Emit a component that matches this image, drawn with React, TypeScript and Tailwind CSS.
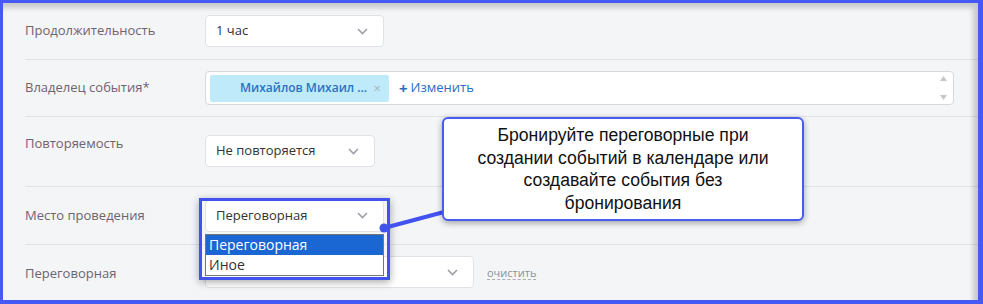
import React from 'react';

const Chevron: React.FC = () => (
  <svg width="11" height="7" viewBox="0 0 11 7" className="shrink-0">
    <polyline points="1,1 5.5,5.5 10,1" fill="none" stroke="#9a9ea6" strokeWidth="1.6" />
  </svg>
);

interface SelectProps {
  value: string;
  width: string;
}

const Select: React.FC<SelectProps> = ({ value, width }) => (
  <div className={`${width} h-[32px] bg-white border border-[#dfe2e6] rounded-[4px] flex items-center justify-between pl-[10px] pr-[15px] text-[13px] text-[#333]`}>
    <span className="whitespace-nowrap">{value}</span>
    <Chevron />
  </div>
);

const Label: React.FC<{ text: string; className?: string }> = ({ text, className }) => (
  <div className={`w-[180px] shrink-0 text-[13px] text-[#6d6470] ${className ?? ''}`}>{text}</div>
);

export default function App() {
  return (
    <div
      className="w-[983px] h-[304px] border-t-[3px] border-l-[3px] border-r-[5px] border-b-[4px] border-[#4759f5] bg-[#f4f5f7] relative overflow-hidden"
      style={{ fontFamily: '"Open Sans", "Noto Sans", sans-serif' }}
    >
      <div className="absolute inset-0 pointer-events-none shadow-[inset_-5px_5px_5px_rgba(0,0,0,0.18)] z-30" />

      <div className="pl-[22px] flex flex-col">
        {/* Продолжительность */}
        <div className="h-[57px] flex items-center border-b border-[#e1e3e7]">
          <Label text="Продолжительность" />
          <Select value="1 час" width="w-[179px]" />
        </div>

        {/* Владелец */}
        <div className="h-[57px] flex items-center border-b border-[#e1e3e7]">
          <Label text="Владелец события*" />
          <div className="w-[749px] h-[34px] bg-white border border-[#d5d8dd] rounded-[4px] flex items-center pl-[4px] pr-[6px]">
            <div className="w-[179px] h-[27px] bg-[#bfeafa] rounded-[2px] flex items-center justify-between pl-[30px] pr-[8px]">
              <span className="text-[12px] font-semibold text-[#2872c4] whitespace-nowrap">Михайлов Михаил ...</span>
              <span className="text-[13px] text-[#a9b6bd] leading-none">×</span>
            </div>
            <div className="ml-[10px] flex items-center gap-[3px] text-[13px] text-[#2a6cc0]">
              <span className="font-bold text-[15px] leading-none">+</span>
              <span>Изменить</span>
            </div>
            <div className="ml-auto flex flex-col justify-between h-[24px]">
              <svg width="7" height="5" viewBox="0 0 7 5"><polygon points="3.5,0 7,5 0,5" fill="#c4c7cc" /></svg>
              <svg width="7" height="5" viewBox="0 0 7 5"><polygon points="0,0 7,0 3.5,5" fill="#c4c7cc" /></svg>
            </div>
          </div>
        </div>

        {/* Повторяемость */}
        <div className="h-[70px] flex items-start border-b border-[#e1e3e7]">
          <Label text="Повторяемость" className="pt-[17px]" />
          <div className="mt-[18px]">
            <Select value="Не повторяется" width="w-[170px]" />
          </div>
        </div>

        {/* Место проведения */}
        <div className="h-[58px] flex items-center border-b border-[#e1e3e7]">
          <Label text="Место проведения" />
          <Select value="Переговорная" width="w-[179px]" />
        </div>

        {/* Переговорная */}
        <div className="h-[54px] flex items-center">
          <Label text="Переговорная" className="pt-[4px]" />
          <Select value="Учебный класс" width="w-[269px]" />
          <span className="ml-[13px] mt-[2px] text-[11px] text-[#8a8f99] border-b border-dashed border-[#a7acb5] leading-[13px]">очистить</span>
        </div>
      </div>

      {/* dropdown list */}
      <div className="absolute left-[202px] top-[231px] w-[179px] bg-white border border-[#767676] z-10 text-[14px]">
        <div className="h-[20px] bg-[#1a66d2] text-white pl-[3px] leading-[20px]">Переговорная</div>
        <div className="h-[20px] text-[#333] pl-[3px] leading-[20px]">Иное</div>
      </div>

      {/* highlight frame */}
      <div className="absolute left-[196px] top-[195px] w-[191px] h-[82px] border-[3px] border-[#4152f0] shadow-[0_2px_8px_rgba(0,0,0,0.35)] z-20" />

      {/* connector */}
      <svg className="absolute left-0 top-0 z-20" width="983" height="304">
        <line x1="381" y1="225" x2="441" y2="209" stroke="#4152f0" strokeWidth="4" />
        <circle cx="381" cy="225" r="4.5" fill="#4152f0" />
      </svg>

      {/* callout */}
      <div
        className="absolute left-[439px] top-[114px] w-[362px] h-[104px] bg-white border-2 border-[#4a5cf0] rounded-[6px] shadow-[0_2px_6px_rgba(0,0,0,0.35)] z-20 flex items-center justify-center text-center text-[17.6px] leading-[22.5px] text-[#111]"
        style={{ fontFamily: '"Liberation Sans", Arial, sans-serif' }}
      >
        <p className="max-w-[320px]">
          Бронируйте переговорные при создании событий в календаре или создавайте события без бронирования
        </p>
      </div>
    </div>
  );
}
